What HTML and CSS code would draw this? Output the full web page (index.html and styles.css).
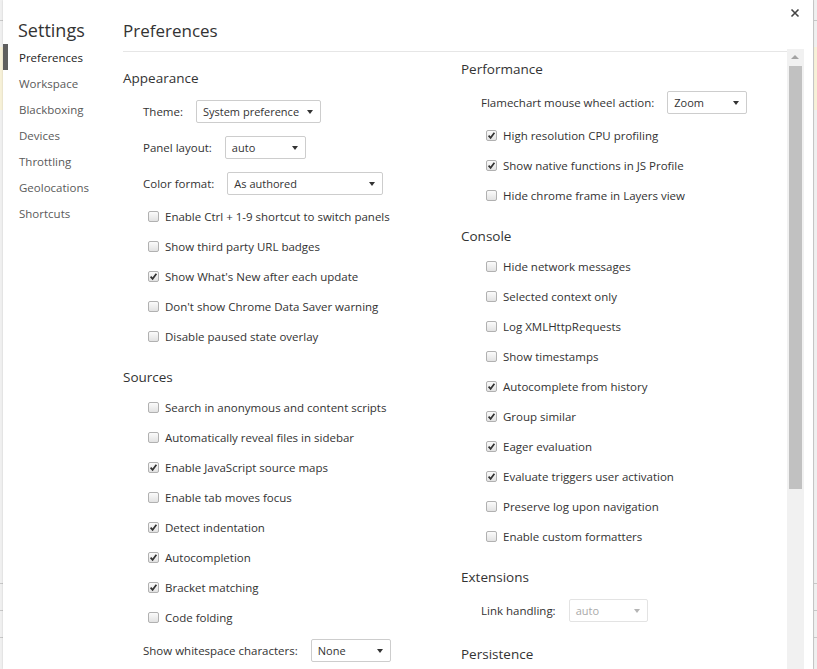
FILE: index.html
```html
<!DOCTYPE html>
<html>
<head>
<meta charset="utf-8">
<link rel="stylesheet" href="styles.css">
</head>
<body>
<div class="backdrop backdrop-left">
  <div class="bd-line bd-top"></div>
  <div class="bd-yellow"></div>
  <div class="bd-line bd-low"></div>
  <div class="bd-line bd-rep"></div>
  <div class="bd-line bd-rep"></div>
</div>
<div class="dialog">
  <aside class="sidebar">
    <h1 class="sidebar-title">Settings</h1>
    <nav class="tabs">
      <div class="tab selected">Preferences</div>
      <div class="tab">Workspace</div>
      <div class="tab">Blackboxing</div>
      <div class="tab">Devices</div>
      <div class="tab">Throttling</div>
      <div class="tab">Geolocations</div>
      <div class="tab">Shortcuts</div>
    </nav>
  </aside>
  <main class="content">
    <div class="pane">
      <header class="pane-header"><h2>Preferences</h2></header>
      <div class="columns">
        <div class="col col-left">
          <section class="block">
            <div class="block-title">Appearance</div>
            <div class="row select-row"><span class="label">Theme:</span><span class="select w125">System preference<i class="arrow"></i></span></div>
            <div class="row select-row"><span class="label">Panel layout:</span><span class="select w81">auto<i class="arrow"></i></span></div>
            <div class="row select-row"><span class="label">Color format:</span><span class="select w156">As authored<i class="arrow"></i></span></div>
            <div class="row check-row"><span class="cb"></span>Enable Ctrl + 1-9 shortcut to switch panels</div>
            <div class="row check-row"><span class="cb"></span>Show third party URL badges</div>
            <div class="row check-row"><span class="cb checked"><svg viewBox="0 0 11 11"><path d="M2.6 5.6 L4.6 7.8 L8.4 2.8"/></svg></span>Show What's New after each update</div>
            <div class="row check-row"><span class="cb"></span>Don't show Chrome Data Saver warning</div>
            <div class="row check-row"><span class="cb"></span>Disable paused state overlay</div>
          </section>
          <section class="block">
            <div class="block-title">Sources</div>
            <div class="row check-row"><span class="cb"></span>Search in anonymous and content scripts</div>
            <div class="row check-row"><span class="cb"></span>Automatically reveal files in sidebar</div>
            <div class="row check-row"><span class="cb checked"><svg viewBox="0 0 11 11"><path d="M2.6 5.6 L4.6 7.8 L8.4 2.8"/></svg></span>Enable JavaScript source maps</div>
            <div class="row check-row"><span class="cb"></span>Enable tab moves focus</div>
            <div class="row check-row"><span class="cb checked"><svg viewBox="0 0 11 11"><path d="M2.6 5.6 L4.6 7.8 L8.4 2.8"/></svg></span>Detect indentation</div>
            <div class="row check-row"><span class="cb checked"><svg viewBox="0 0 11 11"><path d="M2.6 5.6 L4.6 7.8 L8.4 2.8"/></svg></span>Autocompletion</div>
            <div class="row check-row"><span class="cb checked"><svg viewBox="0 0 11 11"><path d="M2.6 5.6 L4.6 7.8 L8.4 2.8"/></svg></span>Bracket matching</div>
            <div class="row check-row"><span class="cb"></span>Code folding</div>
            <div class="row select-row"><span class="label">Show whitespace characters:</span><span class="select w80">None<i class="arrow"></i></span></div>
          </section>
        </div>
        <div class="col col-right">
          <section class="block">
            <div class="block-title">Performance</div>
            <div class="row select-row"><span class="label">Flamechart mouse wheel action:</span><span class="select w80">Zoom<i class="arrow"></i></span></div>
            <div class="row check-row"><span class="cb checked"><svg viewBox="0 0 11 11"><path d="M2.6 5.6 L4.6 7.8 L8.4 2.8"/></svg></span>High resolution CPU profiling</div>
            <div class="row check-row"><span class="cb checked"><svg viewBox="0 0 11 11"><path d="M2.6 5.6 L4.6 7.8 L8.4 2.8"/></svg></span>Show native functions in JS Profile</div>
            <div class="row check-row"><span class="cb"></span>Hide chrome frame in Layers view</div>
          </section>
          <section class="block">
            <div class="block-title">Console</div>
            <div class="row check-row"><span class="cb"></span>Hide network messages</div>
            <div class="row check-row"><span class="cb"></span>Selected context only</div>
            <div class="row check-row"><span class="cb"></span>Log XMLHttpRequests</div>
            <div class="row check-row"><span class="cb"></span>Show timestamps</div>
            <div class="row check-row"><span class="cb checked"><svg viewBox="0 0 11 11"><path d="M2.6 5.6 L4.6 7.8 L8.4 2.8"/></svg></span>Autocomplete from history</div>
            <div class="row check-row"><span class="cb checked"><svg viewBox="0 0 11 11"><path d="M2.6 5.6 L4.6 7.8 L8.4 2.8"/></svg></span>Group similar</div>
            <div class="row check-row"><span class="cb checked"><svg viewBox="0 0 11 11"><path d="M2.6 5.6 L4.6 7.8 L8.4 2.8"/></svg></span>Eager evaluation</div>
            <div class="row check-row"><span class="cb checked"><svg viewBox="0 0 11 11"><path d="M2.6 5.6 L4.6 7.8 L8.4 2.8"/></svg></span>Evaluate triggers user activation</div>
            <div class="row check-row"><span class="cb"></span>Preserve log upon navigation</div>
            <div class="row check-row"><span class="cb"></span>Enable custom formatters</div>
          </section>
          <section class="block">
            <div class="block-title">Extensions</div>
            <div class="row select-row"><span class="label">Link handling:</span><span class="select w79 disabled">auto<i class="arrow"></i></span></div>
          </section>
          <section class="block">
            <div class="block-title">Persistence</div>
          </section>
        </div>
      </div>
    </div>
    <div class="scrollbar">
      <div class="sb-up"></div>
      <div class="sb-thumb"></div>
    </div>
  </main>
  <button class="close" aria-label="Close"><svg viewBox="0 0 10 10"><path d="M1.5 1.5 L8.5 8.5 M8.5 1.5 L1.5 8.5"/></svg></button>
</div>
<div class="backdrop backdrop-right">
  <div class="bd-line bd-top"></div>
  <div class="bd-yellow"></div>
  <div class="bd-line bd-low"></div>
  <div class="bd-line bd-rep"></div>
  <div class="bd-line bd-rep"></div>
</div>
</body>
</html>
```

FILE: styles.css
```css
html, body {
  margin: 0;
  padding: 0;
  height: 669px;
  overflow: hidden;
  background: #fff;
}
body {
  display: flex;
  font-family: "Open Sans", "Noto Sans", sans-serif;
  font-size: 11.5px;
  color: #333;
}
.backdrop {
  background: #f0f0f0;
  height: 669px;
  flex: none;
}
.backdrop-left { width: 3px; }
.backdrop-right { width: 3px; border-left: 1px solid #cfcfcf; }
.bd-line { height: 1px; background: #c8c8c8; }
.bd-top { margin-top: 20px; }
.bd-yellow { height: 63px; margin-top: 26px; background: #f7f1d8; }
.bd-low { margin-top: 473px; }
.bd-rep { margin-top: 26px; }

.dialog {
  position: relative;
  width: 810px;
  height: 669px;
  background: #fff;
  display: flex;
  flex: none;
  box-shadow: 0 0 2px rgba(0,0,0,0.15);
}
.sidebar {
  width: 120px;
  flex: none;
}
.sidebar-title {
  margin: 0;
  height: 44px;
  box-sizing: border-box;
  padding: 17px 0 0 15px;
  font-size: 18px;
  font-weight: normal;
  line-height: 26px;
  color: #333;
}
.tab {
  height: 26px;
  line-height: 28px;
  overflow: hidden;
  box-sizing: border-box;
  color: #5a5a5a;
  border-left: 5px solid transparent;
  padding-left: 11px;
}
.tab.selected {
  border-left-color: #5f5f5f;
  color: #222;
}
.content {
  flex: 1;
  display: flex;
  min-width: 0;
}
.pane {
  width: 664px;
  flex: none;
  display: flex;
  flex-direction: column;
}
.pane-header {
  flex: none;
  height: 51px;
  border-bottom: 1px solid #e6e6e6;
}
.pane-header h2 {
  margin: 0;
  padding-top: 19px;
  font-size: 17px;
  font-weight: normal;
  line-height: 24px;
  color: #333;
}
.columns {
  display: flex;
  flex: none;
}
.col-left { width: 338px; padding-top: 11px; }
.col-right { flex: 1; padding-top: 2px; }
.block { margin-bottom: 11px; }
.block-title {
  height: 30px;
  line-height: 31px;
  font-size: 13.5px;
  color: #333;
}
.row {
  display: flex;
  align-items: center;
  white-space: nowrap;
}
.select-row { height: 36px; padding-left: 20px; }
.check-row { height: 30px; padding-left: 25px; }
.label { margin-right: 13px; }
.cb {
  width: 9px;
  height: 9px;
  border: 1px solid #b1b1b1;
  border-radius: 2px;
  background: linear-gradient(#fbfbfb, #e2e2e2);
  margin-right: 6px;
  display: inline-flex;
  flex: none;
}
.cb svg { width: 11px; height: 11px; margin: -1px; }
.cb svg path { fill: none; stroke: #333; stroke-width: 1.7; }
.select {
  position: relative;
  height: 21px;
  border: 1px solid #cdcdcd;
  border-radius: 2px;
  background: #fff;
  line-height: 22px;
  padding-left: 6px;
  font-size: 11px;
  color: #333;
}
.select .arrow {
  position: absolute;
  right: 7px;
  top: 9px;
  width: 0;
  height: 0;
  border-left: 3.5px solid transparent;
  border-right: 3.5px solid transparent;
  border-top: 4px solid #333;
}
.select.disabled { color: #aaa; border-color: #e3e3e3; }
.select.disabled .arrow { border-top-color: #b5b5b5; }
.w125 { width: 117px; }
.w81 { width: 73px; }
.w156 { width: 148px; }
.w80 { width: 72px; }
.w79 { width: 71px; }

.scrollbar {
  width: 17px;
  margin-top: 49px;
  background: #f1f1f1;
  display: flex;
  flex-direction: column;
  align-items: center;
}
.sb-up {
  height: 17px;
  width: 17px;
  position: relative;
}
.sb-up::after {
  content: "";
  position: absolute;
  left: 4px;
  top: 6px;
  border-left: 4px solid transparent;
  border-right: 4px solid transparent;
  border-bottom: 4px solid #a3a3a3;
}
.sb-thumb {
  width: 13px;
  height: 423px;
  background: #c1c1c1;
}
.close {
  position: absolute;
  right: 13px;
  top: 8px;
  width: 10px;
  height: 10px;
  padding: 0;
  border: 0;
  background: none;
}
.close svg { width: 10px; height: 10px; display: block; }
.close svg path { stroke: #444; stroke-width: 1.6; fill: none; }
```
